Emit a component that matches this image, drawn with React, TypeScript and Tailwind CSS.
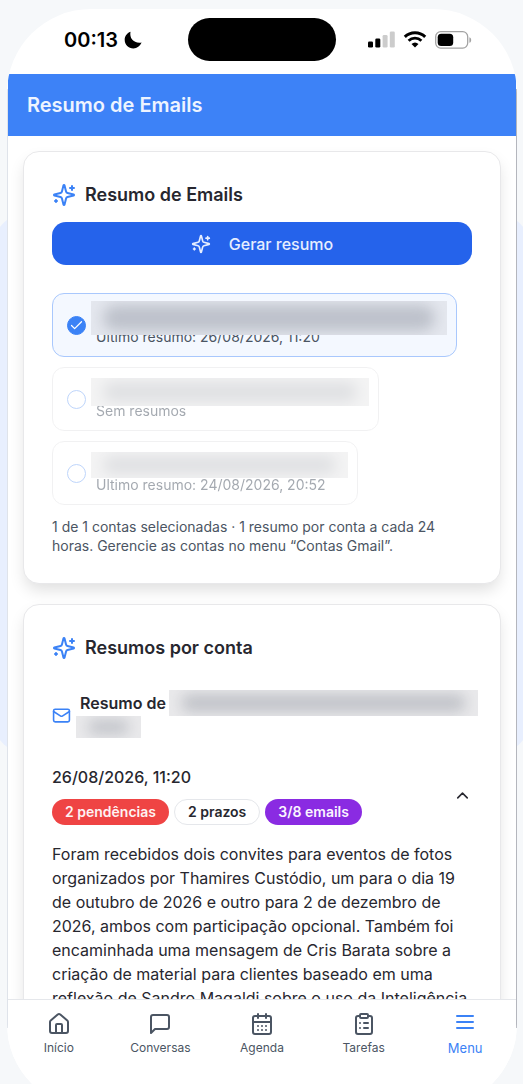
import { useState } from 'react'
import type { ReactNode } from 'react'
import clsx from 'clsx'
import {
    CalendarDays,
    Check,
    ChevronUp,
    ClipboardList,
    House,
    Mail,
} from 'lucide-react'

const ACCOUNTS = [
    {
        id: 'conta-1',
        status: 'Ultimo resumo: 26/08/2026, 11:20',
        width: 'w-[346px]',
        mask: '-top-[3px] h-[34px] bg-[#e4e7ee]',
        enabled: true,
    },
    {
        id: 'conta-2',
        status: 'Sem resumos',
        width: 'w-[268px]',
        mask: 'top-0 h-7 bg-[#e9e9ea]',
        enabled: false,
    },
    {
        id: 'conta-3',
        status: 'Ultimo resumo: 24/08/2026, 20:52',
        width: 'w-[247px]',
        mask: 'top-0 h-[26px] bg-[#e9e9ea]',
        enabled: false,
    },
]

function Sparkles({ className }: { className?: string }) {
    return (
        <svg
            viewBox="0 0 24 24"
            fill="none"
            stroke="currentColor"
            strokeWidth="2"
            strokeLinecap="round"
            strokeLinejoin="round"
            className={className}
            aria-hidden="true"
        >
            <path d="M9.937 15.5A2 2 0 0 0 8.5 14.063l-6.135-1.582a.5.5 0 0 1 0-.962L8.5 9.936A2 2 0 0 0 9.937 8.5l1.582-6.135a.5.5 0 0 1 .963 0L14.063 8.5A2 2 0 0 0 15.5 9.937l6.135 1.581a.5.5 0 0 1 0 .964L15.5 14.063a2 2 0 0 0-1.437 1.437l-1.582 6.135a.5.5 0 0 1-.963 0z" />
            <path d="M20 3v4M22 5h-4M4 17v2M5 18H3" />
        </svg>
    )
}

function StrokeIcon({ d }: { d: string }) {
    return (
        <svg
            viewBox="0 0 24 24"
            fill="none"
            stroke="currentColor"
            strokeWidth="2"
            strokeLinecap="round"
            strokeLinejoin="round"
            className="size-6"
            aria-hidden="true"
        >
            <path d={d} />
        </svg>
    )
}

function StatusBar() {
    return (
        <div className="relative flex h-[65px] shrink-0 items-center justify-between pr-11 pb-1 pl-14">
            <div className="flex items-center gap-1.5 text-xl font-semibold text-black">
                <span>00:13</span>
                <svg viewBox="0 0 18 18" className="size-[18px]" fill="currentColor">
                    <path d="M6.5.8C5.2 7.6 10 12.8 17.6 11.6 16 15.4 13 17.4 9.4 17.4 4.5 17.4.7 13.7.7 9 .7 5.2 2.9 2.1 6.5.8z" />
                </svg>
            </div>
            <div className="absolute top-[9px] left-1/2 h-[43px] w-[148px] -translate-x-1/2 rounded-full bg-black" />
            <div className="flex items-center gap-2 text-black">
                <svg viewBox="0 0 27 17" className="h-[17px] w-[27px]" fill="currentColor">
                    <rect x="0" y="10.5" width="5" height="6" rx="1.3" />
                    <rect x="7.3" y="7.5" width="5" height="9" rx="1.3" />
                    <rect x="14.6" y="4" width="5" height="12.5" rx="1.3" opacity=".2" />
                    <rect x="21.8" y="0.5" width="5" height="16" rx="1.3" opacity=".2" />
                </svg>
                <svg viewBox="0 0 24 17" className="h-[17px] w-6" fill="none">
                    <path d="M1.8 5.8a14.7 14.7 0 0 1 20.4 0" stroke="currentColor" strokeWidth="3" />
                    <path d="M5.6 9.8a9.2 9.2 0 0 1 12.8 0" stroke="currentColor" strokeWidth="2.8" />
                    <path d="M8.5 13a5.2 5.2 0 0 1 7 0L12 16.6z" fill="currentColor" />
                </svg>
                <svg viewBox="0 0 37 18" className="h-[18px] w-[37px]">
                    <rect x=".7" y=".7" width="32" height="16.4" rx="5" fill="none" stroke="#a3a3a3" strokeWidth="1.3" />
                    <rect x="2.7" y="2.7" width="15.5" height="12.4" rx="3.5" fill="currentColor" />
                    <path d="M34.4 6.2c2.4.6 2.4 5 0 5.6z" fill="#a3a3a3" />
                </svg>
            </div>
        </div>
    )
}

function Redacted({ className }: { className?: string }) {
    return (
        <span
            role="img"
            aria-label="Email oculto"
            className={clsx('block overflow-hidden px-3 py-1', className)}
        >
            <span className="block h-full rounded-full bg-gray-600/25 blur-[7px]" />
        </span>
    )
}

function Card({ title, children }: { title: string; children: ReactNode }) {
    return (
        <section className="rounded-2xl border border-[#e8e8ea] bg-white p-7 shadow-[0_8px_16px_-2px_rgba(0,0,0,0.13)]">
            <h2 className="flex h-[30px] items-center gap-[9px] text-lg font-semibold text-[#27272f]">
                <Sparkles className="size-6 text-[#3b82f6]" />
                {title}
            </h2>
            {children}
        </section>
    )
}

function AccountOption({ account }: { account: (typeof ACCOUNTS)[number] }) {
    const [checked, setChecked] = useState(account.enabled)

    return (
        <label
            className={clsx(
                'flex w-fit items-center gap-2.5 rounded-xl border px-3.5 py-2.5',
                checked ? 'border-[#a9c8fd] bg-[#f4f8ff]' : 'border-[#e5e5e7] bg-white',
                !account.enabled && 'opacity-50'
            )}
        >
            <span className="relative size-[19px]">
                <input
                    type="checkbox"
                    name={account.id}
                    checked={checked}
                    disabled={!account.enabled}
                    onChange={(e) => setChecked(e.target.checked)}
                    className="block size-[19px] appearance-none rounded-full border border-[#7fadf9] bg-white checked:border-[#3b82f6] checked:bg-[#3b82f6]"
                />
                {checked && (
                    <Check
                        size={15}
                        strokeWidth={2}
                        className="pointer-events-none absolute top-0.5 left-0.5 text-white"
                    />
                )}
            </span>
            <span className="block">
                <span className={clsx('relative block h-6', account.width)}>
                    <Redacted className={clsx('absolute -inset-x-[5px] z-10', account.mask)} />
                </span>
                <span className="block text-sm leading-[18px] text-[#4b5563]">
                    {account.status}
                </span>
            </span>
        </label>
    )
}

function Badge({ className, children }: { className: string; children: ReactNode }) {
    return (
        <span className={clsx('flex h-[26px] items-center rounded-full px-[13px] text-sm font-semibold', className)}>
            {children}
        </span>
    )
}

const NAV_ITEMS = [
    { label: 'Início', icon: <House size={24} /> },
    {
        label: 'Conversas',
        icon: <StrokeIcon d="M21 15a2 2 0 0 1-2 2H7l-4 4V5a2 2 0 0 1 2-2h14a2 2 0 0 1 2 2z" />,
    },
    { label: 'Agenda', icon: <CalendarDays size={24} /> },
    { label: 'Tarefas', icon: <ClipboardList size={24} /> },
    { label: 'Menu', icon: <StrokeIcon d="M4 4h16M4 10h16M4 16h16" />, active: true },
]

function BottomNav() {
    return (
        <nav className="grid h-[109px] shrink-0 grid-cols-5 border-t border-[#e5e7eb] bg-white pt-3">
            {NAV_ITEMS.map((item) => (
                <a
                    key={item.label}
                    href="#"
                    className={clsx(
                        'flex flex-col items-center gap-0.5',
                        item.active ? 'text-[13px] text-[#3b82f6]' : 'text-xs text-[#4b5563]'
                    )}
                >
                    {item.icon}
                    <span className="leading-5">{item.label}</span>
                </a>
            ))}
        </nav>
    )
}

export default function App() {
    return (
        <div className="relative flex h-screen flex-col overflow-hidden bg-[#f6f8fa] pt-[9px] pr-1.5 pl-[7px] font-['Inter',sans-serif]">
            <div className="absolute -inset-x-2 top-[211px] h-[545px] rounded-[40px] bg-[#e8effe]" />
            <div className="relative -mb-6 flex min-h-0 flex-1 flex-col overflow-hidden rounded-[84px] bg-white px-px">
                {/* thin side edges of the phone frame */}
                <div className="pointer-events-none absolute inset-x-0 inset-y-20 z-20 border-x border-r-[#b4b6bd] border-l-[#dfe3ea]" />
                <StatusBar />
                <header className="flex h-[62px] shrink-0 items-center bg-[#3d82f7] px-[19px]">
                    <h1 className="text-xl font-semibold text-[#eef4ff]">
                        Resumo de Emails
                    </h1>
                </header>
                <main className="flex min-h-0 flex-1 flex-col gap-5 overflow-hidden px-[15px] pt-[15px]">
                    <Card title="Resumo de Emails">
                        <button
                            type="button"
                            className="mt-3 flex h-[43px] w-full items-center justify-center gap-[18px] rounded-[14px] bg-[#2563eb] text-base font-medium text-[#e6eeff]"
                        >
                            <Sparkles className="size-5" />
                            Gerar resumo
                        </button>
                        <div className="mt-7 flex flex-col gap-2.5">
                            {ACCOUNTS.map((account) => (
                                <AccountOption key={account.id} account={account} />
                            ))}
                        </div>
                        <p className="mt-3 text-sm leading-[19px] text-[#4b5563]">
                            1 de 1 contas selecionadas · 1 resumo por conta a cada 24
                            horas. Gerencie as contas no menu “Contas Gmail”.
                        </p>
                    </Card>
                    <Card title="Resumos por conta">
                        <div className="mt-7 flex items-center gap-[9px]">
                            <Mail size={19} className="shrink-0 text-[#3b82f6]" />
                            <h3 className="min-w-0 flex-1 text-base leading-6 font-semibold text-[#27272f]">
                                <span className="flex h-6 items-center">
                                    Resumo de
                                    <Redacted className="-mr-1.5 ml-[3px] h-[26px] min-w-0 flex-1 bg-[#e9e9eb]" />
                                </span>
                                <span className="flex h-6 items-center">
                                    <Redacted className="-ml-1 h-[22px] w-[65px] bg-[#e9e9eb]" />
                                </span>
                            </h3>
                        </div>
                        <div className="mt-[26px] flex items-center justify-between">
                            <div>
                                <p className="text-base leading-6 font-medium text-[#27272f]">
                                    26/08/2026, 11:20
                                </p>
                                <div className="mt-2.5 flex gap-[5px]">
                                    <Badge className="bg-[#ef4444] text-red-50">2 pendências</Badge>
                                    <Badge className="border border-[#e5e7eb] text-[#27272f]">2 prazos</Badge>
                                    <Badge className="bg-[#8a2be2] text-purple-50">3/8 emails</Badge>
                                </div>
                            </div>
                            <button type="button" aria-label="Recolher resumo">
                                <ChevronUp size={19} className="text-[#27272f]" />
                            </button>
                        </div>
                        <p className="mt-[17px] text-base leading-6 text-[#27272f]">
                            Foram recebidos dois convites para eventos de fotos
                            organizados por Thamires Custódio, um para o dia 19 de
                            outubro de 2026 e outro para 2 de dezembro de 2026, ambos
                            com participação opcional. Também foi encaminhada uma
                            mensagem de Cris Barata sobre a criação de material para
                            clientes baseado em uma reflexão de Sandro Magaldi sobre o
                            uso da Inteligência
                        </p>
                    </Card>
                </main>
                <BottomNav />
            </div>
        </div>
    )
}
